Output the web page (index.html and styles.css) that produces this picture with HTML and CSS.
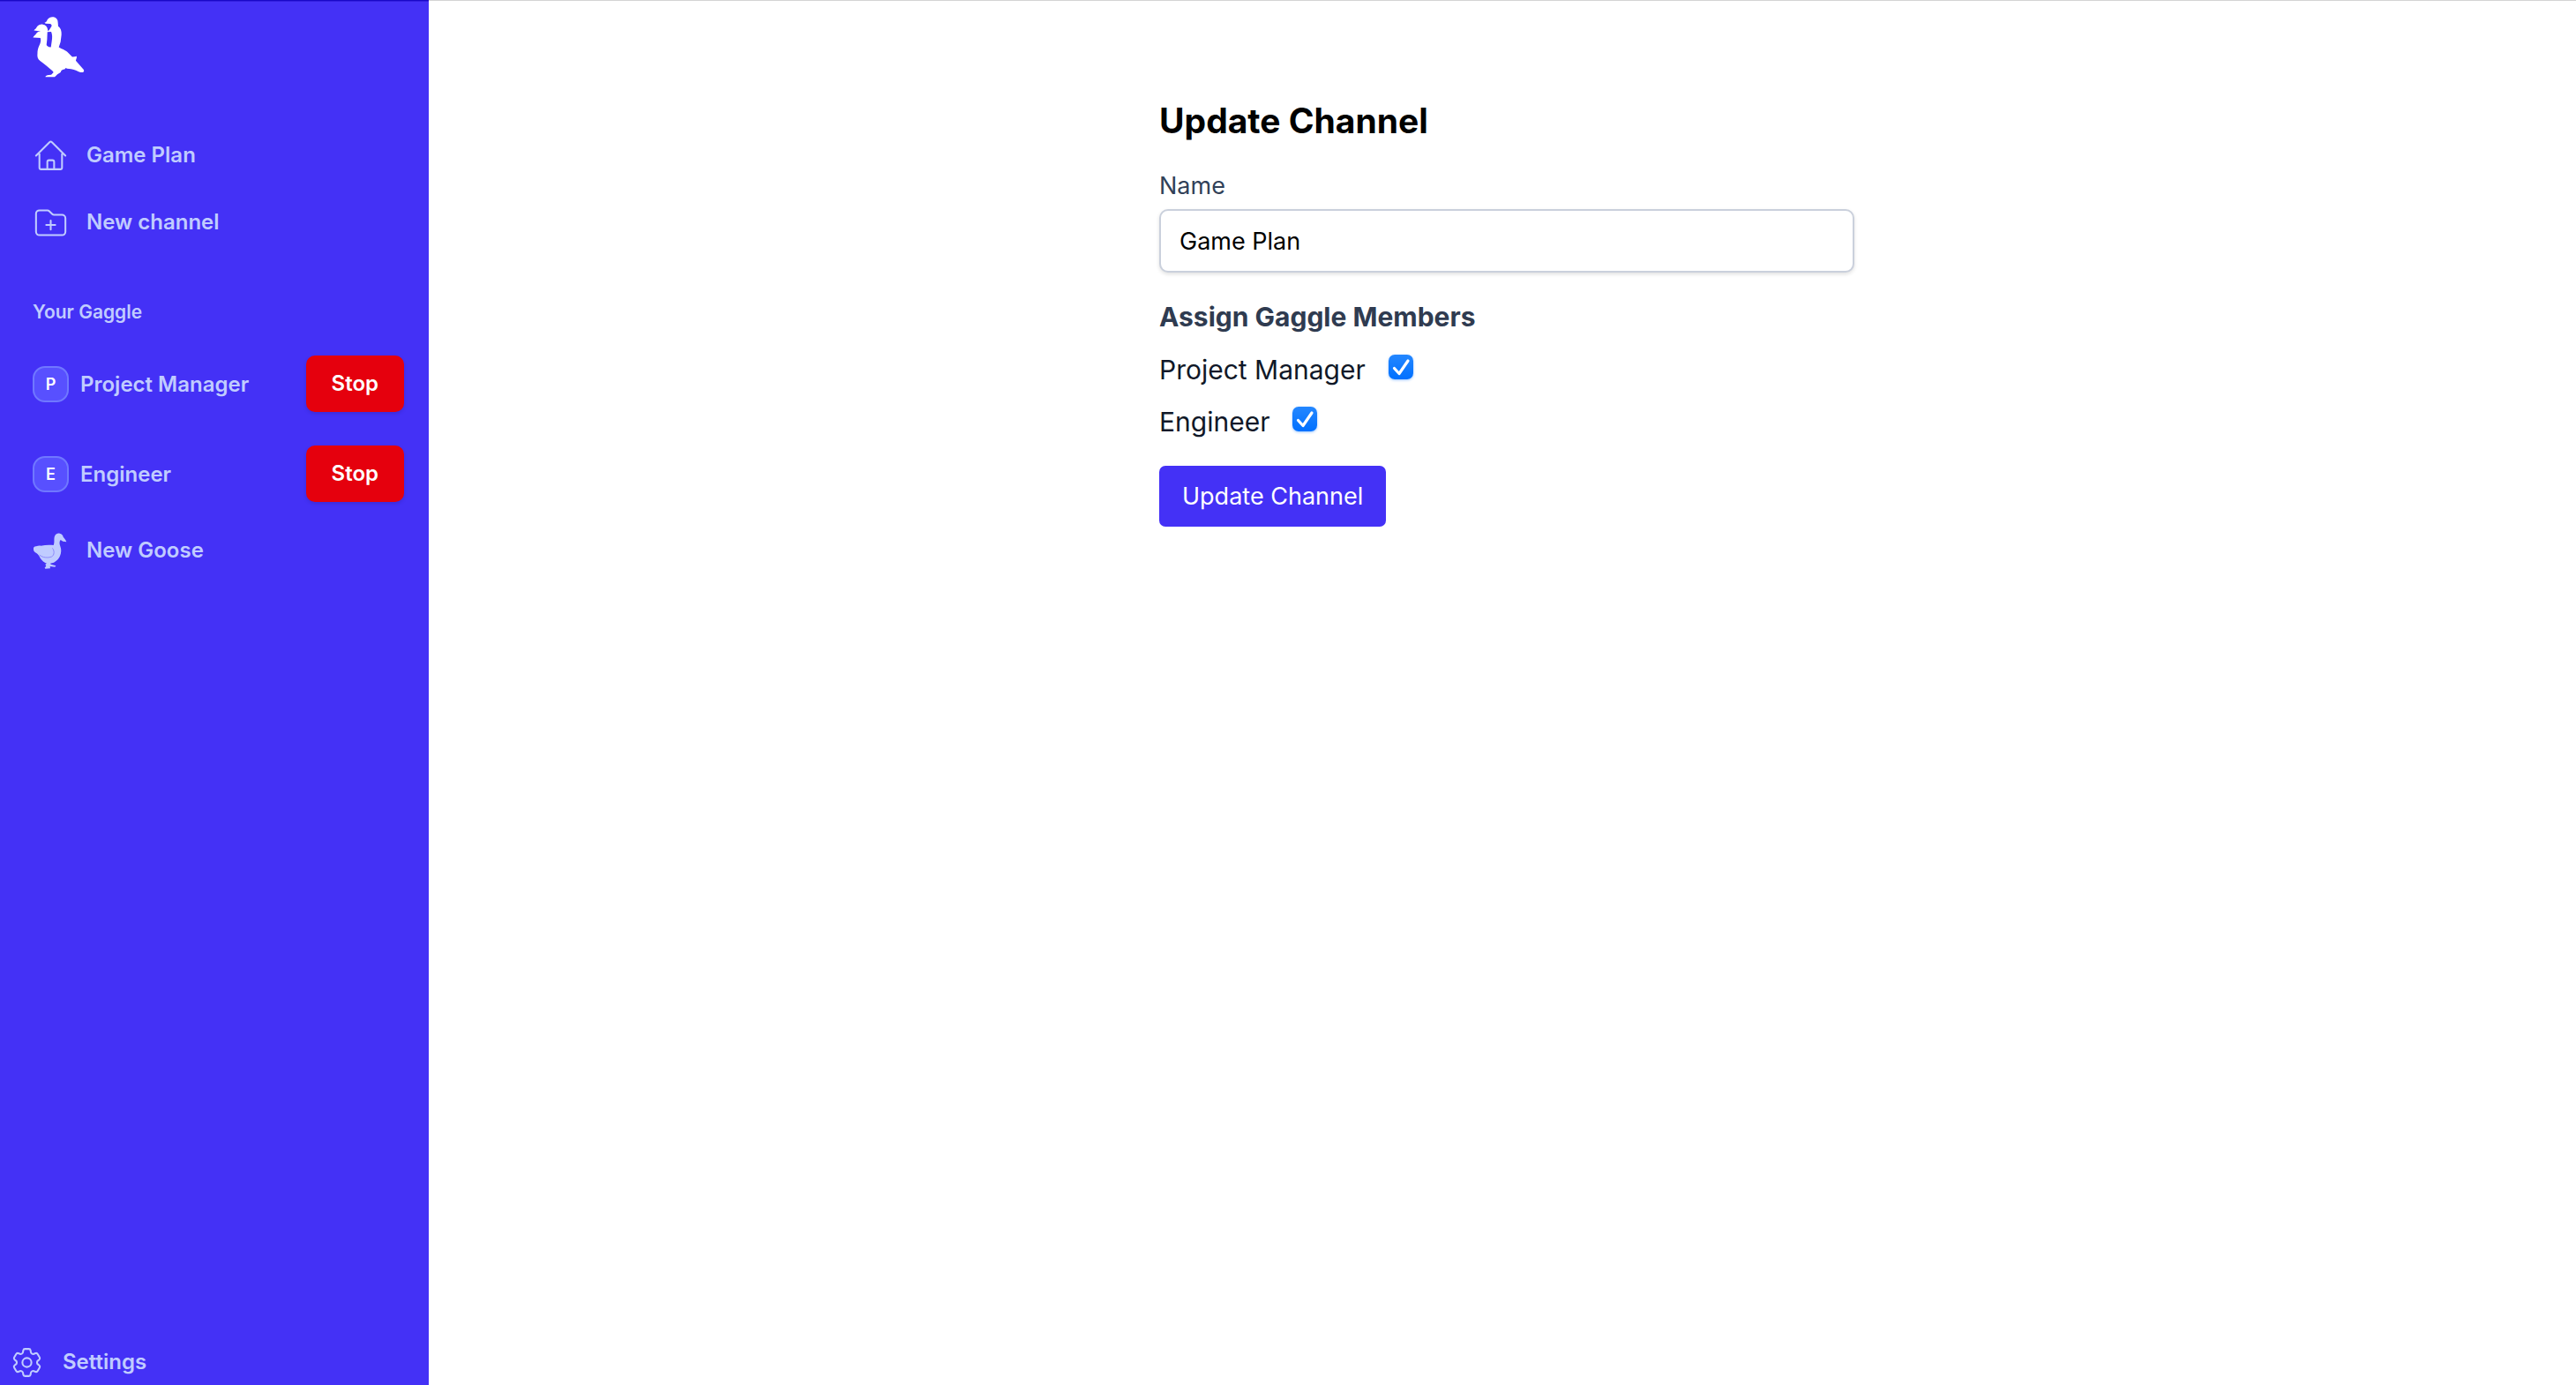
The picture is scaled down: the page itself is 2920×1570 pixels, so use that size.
FILE: index.html
```html
<!DOCTYPE html>
<html lang="en">
<head>
<meta charset="utf-8">
<title>Update Channel</title>
<link rel="stylesheet" href="styles.css">
</head>
<body>
<div class="app">
  <aside class="sidebar">
    <a class="logo" href="#" aria-label="Home">
      <svg viewBox="48 28 177 208" aria-hidden="true">
        <path d="M88 48 C94 47 96 44 98 38 C103 30 111 28 119 29 C129 31 134 38 134 48 L135 61 C143 65 147 76 146 90 L143 114 L137 132 C148 138 157 142 165 147 L183 165 C188 165 193 164 198 163 C199 169 196 173 195 178 L222 209 C224 213 223 217 219 218 C208 218 200 213 193 210 C183 207 174 206 165 205 L161 203 L157 207 C150 208 147 210 145 213 C145 220 136 222 130 227 L123 234 L91 234 C92 229 96 228 103 227 L111 226 L119 218 L115 213 C101 200 86 189 73 179 C64 172 63 164 64 154 C64 143 66 136 69 129 C75 117 77 108 74 100 L49 99 C51 92 57 91 60 85 C64 80 70 78 75 78 L52 75 C53 70 59 70 61 64 C67 56 75 53 82 54 C91 55 98 61 99 72 L100 77 C106 74 107 68 111 63 C114 59 113 54 108 52 L92 51 Z"/>
        <path class="logo-gap" d="M98 80 L111 79 C115 88 115 100 113 111 L110 132 L103 131 C98 128 95 127 95 123 L97 105 Z"/>
      </svg>
    </a>
    <nav class="nav">
      <a class="nav-link" href="#">
        <svg class="icon" viewBox="0 0 24 24" aria-hidden="true"><path d="m2.25 12 8.954-8.955c.44-.439 1.152-.439 1.591 0L21.75 12M4.5 9.75v10.125c0 .621.504 1.125 1.125 1.125H9.75v-4.875c0-.621.504-1.125 1.125-1.125h2.25c.621 0 1.125.504 1.125 1.125V21h4.125c.621 0 1.125-.504 1.125-1.125V9.75M8.25 21h8.25"/></svg>
        Game Plan
      </a>
      <a class="nav-link" href="#">
        <svg class="icon" viewBox="0 0 24 24" aria-hidden="true"><path d="M12 10.5v6m3-3H9m4.06-7.19-2.12-2.12a1.5 1.5 0 0 0-1.061-.44H4.5A2.25 2.25 0 0 0 2.25 6v12a2.25 2.25 0 0 0 2.25 2.25h15A2.25 2.25 0 0 0 21.75 18V9a2.25 2.25 0 0 0-2.25-2.25h-5.379a1.5 1.5 0 0 1-1.06-.44Z"/></svg>
        New channel
      </a>
    </nav>
    <h2 class="section-title">Your Gaggle</h2>
    <ul class="members">
      <li class="member">
        <a class="member-link" href="#"><span class="badge">P</span>Project Manager</a>
        <button class="stop" type="button">Stop</button>
      </li>
      <li class="member">
        <a class="member-link" href="#"><span class="badge">E</span>Engineer</a>
        <button class="stop" type="button">Stop</button>
      </li>
    </ul>
    <a class="nav-link" href="#">
      <svg class="icon goose" viewBox="0 0 123 123" aria-hidden="true">
        <path d="M3 57 C2 50 5 46 12 46 C18 44 22 43 28 44 C42 41 58 40 71 42 C75 34 72 22 74 14 C77 4 84 1 92 2 C99 3 103 8 104 14 C108 19 114 25 115 31 L103 29 L95 24 C90 30 91 38 94 46 C98 56 98 68 93 79 C90 87 83 95 72 101 L60 104 L62 107 L79 112 L76 116 L59 114 L60 121 L43 122 L41 118 L46 114 L43 107 L48 104 C39 101 32 94 26 86 C22 78 18 73 13 69 C7 66 3 62 3 57 Z"/>
        <path class="wing" d="M68 53 C75 61 74 76 65 81 C53 86 34 85 24 76"/>
      </svg>
      New Goose
    </a>
    <a class="nav-link settings" href="#">
      <svg class="icon" viewBox="0 0 24 24" aria-hidden="true"><path d="M9.594 3.94c.09-.542.56-.94 1.11-.94h2.593c.55 0 1.02.398 1.11.94l.213 1.281c.063.374.313.686.645.87.074.04.147.083.22.127.325.196.72.257 1.075.124l1.217-.456a1.125 1.125 0 0 1 1.37.49l1.296 2.247a1.125 1.125 0 0 1-.26 1.431l-1.003.827c-.293.241-.438.613-.43.992a7.723 7.723 0 0 1 0 .255c-.008.378.137.75.43.991l1.004.827c.424.35.534.955.26 1.43l-1.298 2.247a1.125 1.125 0 0 1-1.369.491l-1.217-.456c-.355-.133-.75-.072-1.076.124a6.47 6.47 0 0 1-.22.128c-.331.183-.581.495-.644.869l-.213 1.281c-.09.543-.56.94-1.11.94h-2.594c-.55 0-1.019-.398-1.11-.94l-.213-1.281c-.062-.374-.312-.686-.644-.87a6.52 6.52 0 0 1-.22-.127c-.325-.196-.72-.257-1.076-.124l-1.217.456a1.125 1.125 0 0 1-1.369-.49l-1.297-2.247a1.125 1.125 0 0 1 .26-1.431l1.004-.827c.292-.24.437-.613.43-.991a6.932 6.932 0 0 1 0-.255c.007-.38-.138-.751-.43-.992l-1.004-.827a1.125 1.125 0 0 1-.26-1.43l1.297-2.247a1.125 1.125 0 0 1 1.37-.491l1.216.456c.356.133.751.072 1.076-.124.072-.044.146-.086.22-.128.332-.183.582-.495.644-.869l.214-1.28Z"/><path d="M15 12a3 3 0 1 1-6 0 3 3 0 0 1 6 0Z"/></svg>
      Settings
    </a>
  </aside>
  <main class="main">
    <form class="form">
      <h1 class="title">Update Channel</h1>
      <label class="label" for="name">Name</label>
      <input class="input" id="name" type="text" value="Game Plan">
      <fieldset class="assign">
        <legend class="legend">Assign Gaggle Members</legend>
        <div class="choice">
          <label for="pm">Project Manager</label>
          <input class="check" id="pm" type="checkbox" checked>
        </div>
        <div class="choice">
          <label for="eng">Engineer</label>
          <input class="check" id="eng" type="checkbox" checked>
        </div>
      </fieldset>
      <button class="submit" type="submit">Update Channel</button>
    </form>
  </main>
</div>
</body>
</html>
```
FILE: styles.css
```css
* { box-sizing: border-box; }

body {
  margin: 0;
  background: #fff;
  color: #101828;
  font-family: Inter, "Liberation Sans", sans-serif;
}

.app {
  display: flex;
  min-height: 100vh;
}

.sidebar {
  display: flex;
  flex-direction: column;
  flex: none;
  width: 486px;
  padding: 18px 28px 0 37px;
  border-top: 1px solid #1a08c8;
  background: #4431f6;
  box-shadow: inset 0 1px #3420e0;
}

.logo {
  width: 59px;
  height: 69px;
}

.logo svg {
  display: block;
  width: 100%;
  height: 100%;
  fill: #fff;
}

.logo .logo-gap { fill: #4431f6; }

.nav {
  display: grid;
  gap: 8px;
  margin-top: 54px;
}

.nav-link {
  display: flex;
  align-items: center;
  gap: 20px;
  height: 68px;
  color: #c0ccff;
  font-size: 24px;
  font-weight: 600;
  line-height: 40px;
  text-decoration: none;
}

.icon {
  flex: none;
  width: 41px;
  height: 41px;
  fill: none;
  stroke: currentColor;
  stroke-width: 1.2;
  stroke-linecap: round;
  stroke-linejoin: round;
}

.goose {
  fill: currentColor;
  stroke: none;
}

.goose .wing {
  fill: none;
  stroke: #8d8afb;
  stroke-width: 3;
}

.section-title {
  margin: 48px 0 29px;
  color: #c0ccff;
  font-size: 21px;
  font-weight: 600;
  line-height: 40px;
}

.members {
  display: grid;
  gap: 38px;
  margin: 0 0 21px;
  padding: 0;
  list-style: none;
}

.member {
  display: flex;
  align-items: center;
  justify-content: space-between;
}

.member-link {
  display: flex;
  align-items: center;
  gap: 13px;
  color: #c0ccff;
  font-size: 24px;
  font-weight: 600;
  text-decoration: none;
}

.badge {
  display: grid;
  place-items: center;
  width: 41px;
  height: 41px;
  border: 2px solid #7078ff;
  border-radius: 14px;
  background: #5850ff;
  color: #fff;
  font-size: 18px;
}

.stop {
  height: 64px;
  padding: 0 29px 2px;
  border: 0;
  border-radius: 10px;
  background: #e5000d;
  box-shadow: 0 2px 4px rgb(0 0 0 / 12%);
  color: #fff;
  font: 600 24px Inter, "Liberation Sans", sans-serif;
}

.settings {
  margin: auto 0 -8px -27px;
}

.main {
  flex: 1;
  padding: 112px 0 0 10px;
  border-top: 1px solid #d4d4d4;
}

.form {
  display: flex;
  flex-direction: column;
  align-items: flex-start;
  max-width: 788px;
  margin: 0 auto;
}

.title {
  margin: 0 0 30px;
  color: #000;
  font-size: 39px;
  font-weight: 700;
  line-height: 48px;
}

.label {
  margin-bottom: 6px;
  color: #314158;
  font-size: 27px;
  line-height: 40px;
}

.input {
  width: 100%;
  height: 72px;
  padding: 0 21px;
  border: 2px solid #cad0dc;
  border-radius: 10px;
  background: #fff;
  box-shadow: 0 2px 4px rgb(0 0 0 / 12%);
  color: #000;
  font: 27px Inter, "Liberation Sans", sans-serif;
}

.assign {
  display: grid;
  gap: 19px;
  margin: 30px 0;
  padding: 0;
  border: 0;
}

.legend {
  margin-bottom: 20px;
  padding: 0;
  color: #2f3b50;
  font-size: 30px;
  font-weight: 700;
  line-height: 40px;
}

.choice {
  display: flex;
  align-items: baseline;
  gap: 26px;
  font-size: 30px;
  line-height: 40px;
}

.check {
  width: 28px;
  height: 28px;
  margin: 0;
  appearance: none;
  border-radius: 7px;
  background: linear-gradient(#2487ff, #0070ff);
  box-shadow: 0 1px 3px rgb(0 112 255 / 40%);
}

.check:checked {
  background: url("data:image/svg+xml,%3Csvg xmlns='http://www.w3.org/2000/svg' viewBox='0 0 28 28'%3E%3Cpath d='M6.5 15.5 12 21.5 22 7' fill='none' stroke='white' stroke-width='3.2' stroke-linecap='round' stroke-linejoin='round'/%3E%3C/svg%3E"), linear-gradient(#2487ff, #0070ff);
}

.submit {
  height: 69px;
  padding: 0 26px;
  border: 0;
  border-radius: 7px;
  background: #4431f6;
  color: #fff;
  font: 27px Inter, "Liberation Sans", sans-serif;
}
```
